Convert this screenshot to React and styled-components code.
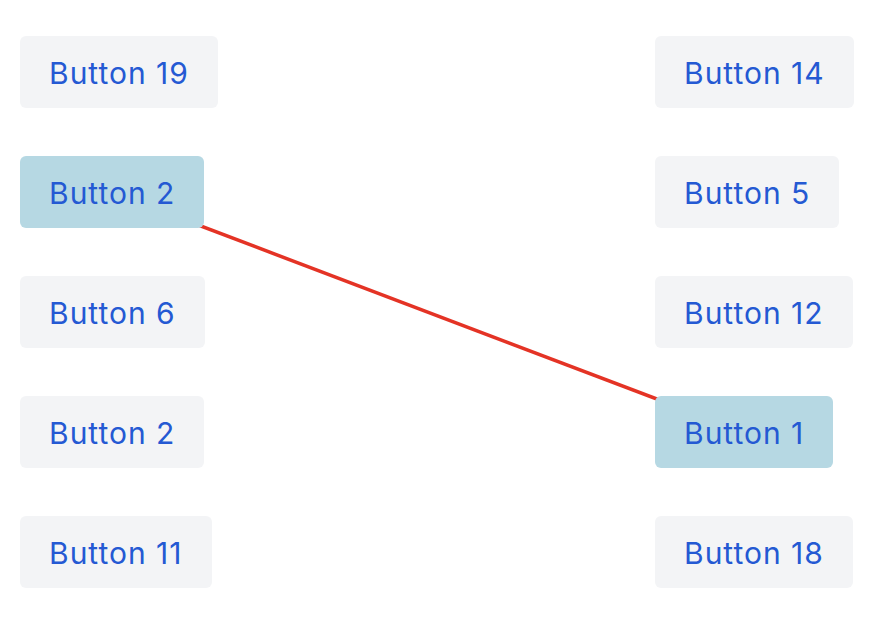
import React from 'react';
import styled, { createGlobalStyle } from 'styled-components';

const GlobalStyle = createGlobalStyle`
    body {
        margin: 0;
        background: #ffffff;
        font-family: Inter, "Noto Sans", sans-serif;
    }
`;

const Board = styled.div`
    position: relative;
    width: 894px;
    height: 622px;
    box-sizing: border-box;
    padding: 36px 20px;
    display: grid;
    grid-template-columns: 635px auto;
`;

const Column = styled.div`
    position: relative;
    z-index: 1;
    display: flex;
    flex-direction: column;
    align-items: flex-start;
    gap: 48px;
`;

const Button = styled.button`
    height: 72px;
    padding: 2px 29px 0;
    border: none;
    border-radius: 6px;
    background: ${p => (p.$active ? '#b6d8e3' : '#f3f4f6')};
    color: #2459d3;
    font-family: Inter, "Noto Sans", sans-serif;
    font-size: 30px;
    letter-spacing: 1px;
    cursor: pointer;
`;

const Wire = styled.svg`
    position: absolute;
    inset: 0;
    z-index: 0;
    pointer-events: none;
`;

const left = ['Button 19', 'Button 2', 'Button 6', 'Button 2', 'Button 11'];
const right = ['Button 14', 'Button 5', 'Button 12', 'Button 1', 'Button 18'];

export default function App() {
    return (
        <>
            <GlobalStyle />
            <Board>
                <Wire width="894" height="622">
                    <line x1="111" y1="192" x2="744" y2="432" stroke="#e43325" strokeWidth="3.5" />
                </Wire>
                <Column>
                    {left.map((label, i) => (
                        <Button key={i} $active={i === 1}>{label}</Button>
                    ))}
                </Column>
                <Column>
                    {right.map((label, i) => (
                        <Button key={i} $active={i === 3}>{label}</Button>
                    ))}
                </Column>
            </Board>
        </>
    );
}
